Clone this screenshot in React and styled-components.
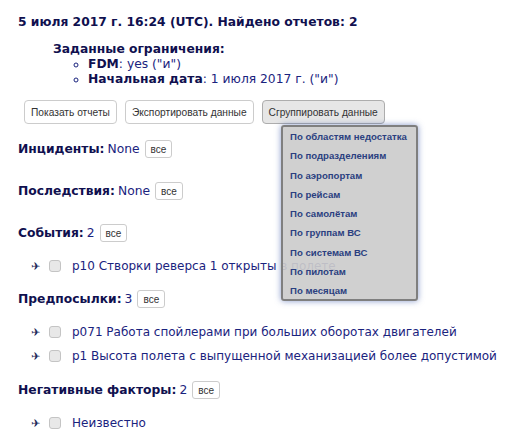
import React from "react";
import styled, { createGlobalStyle } from "styled-components";

const GlobalStyle = createGlobalStyle`
  html, body {
    margin: 0;
    padding: 0;
    background: #ffffff;
  }
  body {
    font-family: "DejaVu Sans", Verdana, sans-serif;
    font-size: 12.3px;
    line-height: 15px;
    color: #1a237e;
  }
`;

const Page = styled.div`
  position: relative;
  width: 514px;
  height: 438px;
  overflow: hidden;
  padding: 15px 0 0 18px;
  box-sizing: border-box;
`;

const Title = styled.div`
  font-weight: bold;
  color: #10104f;
`;

const Limits = styled.div`
  margin: 12px 0 0 35px;
`;

const LimitsTitle = styled.div`
  font-weight: bold;
  color: #10104f;
`;

const LimitsList = styled.ul`
  list-style: circle;
  margin: 0;
  padding: 0 0 0 35px;

  b {
    color: #10104f;
  }
`;

const Toolbar = styled.div`
  display: flex;
  gap: 8px;
  margin: 13px 0 0 6px;
`;

const Button = styled.div`
  height: 24px;
  padding: 0 6px;
  display: flex;
  align-items: center;
  box-sizing: border-box;
  border: 1px solid ${(p) => (p.$active ? "#adadad" : "#cccccc")};
  border-radius: 4px;
  background: ${(p) => (p.$active ? "#e6e6e6" : "#ffffff")};
  color: #333333;
  font-family: "Liberation Sans", Arial, sans-serif;
  font-size: 10.2px;
`;

const Section = styled.div`
  display: flex;
  align-items: center;
  gap: 3px;
  height: 18px;
  margin-top: ${(p) => p.$top}px;
`;

const SectionName = styled.b`
  color: #10104f;
`;

const AllButton = styled.span`
  display: inline-flex;
  align-items: center;
  height: 18px;
  margin-left: 2px;
  padding: 0 5px;
  box-sizing: border-box;
  border: 1px solid #cccccc;
  border-radius: 3px;
  color: #333333;
  font-family: "Liberation Sans", Arial, sans-serif;
  font-size: 10px;
`;

const Rows = styled.div`
  display: flex;
  flex-direction: column;
  gap: 8px;
  margin: 16px 0 0 13px;
`;

const Row = styled.div`
  display: flex;
  align-items: center;
  height: 16px;
  font-size: 12px;
  white-space: nowrap;
`;

const Plane = styled.span`
  flex: none;
  width: 18px;
  font-size: 11px;
  color: #1f2a5c;
`;

const Check = styled.span`
  flex: none;
  width: 12px;
  height: 12px;
  margin-right: 11px;
  box-sizing: border-box;
  border: 1px solid #c4c4c4;
  border-radius: 3px;
  background: #e8e8e8;
`;

const Menu = styled.div`
  position: absolute;
  left: 281px;
  top: 125px;
  width: 137px;
  height: 176px;
  box-sizing: border-box;
  padding-left: 7px;
  border: 2px solid #7f7f7f;
  border-radius: 3px;
  background: rgba(204, 204, 204, 0.92);
  box-shadow: 0 0 6px rgba(60, 90, 170, 0.6);
`;

const MenuItem = styled.div`
  height: 19.25px;
  line-height: 19.25px;
  font-family: "Liberation Sans", Arial, sans-serif;
  font-size: 9.6px;
  font-weight: bold;
  color: #2b3f80;
  white-space: nowrap;
`;

const groups = [
  "По областям недостатка",
  "По подразделениям",
  "По аэропортам",
  "По рейсам",
  "По самолётам",
  "По группам ВС",
  "По системам ВС",
  "По пилотам",
  "По месяцам",
];

function Item({ children }) {
  return (
    <Row>
      <Plane>✈</Plane>
      <Check />
      {children}
    </Row>
  );
}

export default function App() {
  return (
    <Page>
      <GlobalStyle />
      <Title>5 июля 2017 г. 16:24 (UTC). Найдено отчетов: 2</Title>
      <Limits>
        <LimitsTitle>Заданные ограничения:</LimitsTitle>
        <LimitsList>
          <li>
            <b>FDM</b>: yes ("и")
          </li>
          <li>
            <b>Начальная дата</b>: 1 июля 2017 г. ("и")
          </li>
        </LimitsList>
      </Limits>
      <Toolbar>
        <Button>Показать отчеты</Button>
        <Button>Экспортировать данные</Button>
        <Button $active>Сгруппировать данные</Button>
      </Toolbar>
      <Section $top={16}>
        <SectionName>Инциденты:</SectionName> None <AllButton>все</AllButton>
      </Section>
      <Section $top={24}>
        <SectionName>Последствия:</SectionName> None <AllButton>все</AllButton>
      </Section>
      <Section $top={24}>
        <SectionName>События:</SectionName> 2 <AllButton>все</AllButton>
      </Section>
      <Rows>
        <Item>р10 Створки реверса 1 открыты в полете</Item>
      </Rows>
      <Section $top={16}>
        <SectionName>Предпосылки:</SectionName> 3 <AllButton>все</AllButton>
      </Section>
      <Rows>
        <Item>р071 Работа спойлерами при больших оборотах двигателей</Item>
        <Item>р1 Высота полета с выпущенной механизацией более допустимой</Item>
      </Rows>
      <Section $top={17}>
        <SectionName>Негативные факторы:</SectionName> 2 <AllButton>все</AllButton>
      </Section>
      <Rows>
        <Item>Неизвестно</Item>
      </Rows>
      <Menu>
        {groups.map((g) => (
          <MenuItem key={g}>{g}</MenuItem>
        ))}
      </Menu>
    </Page>
  );
}
